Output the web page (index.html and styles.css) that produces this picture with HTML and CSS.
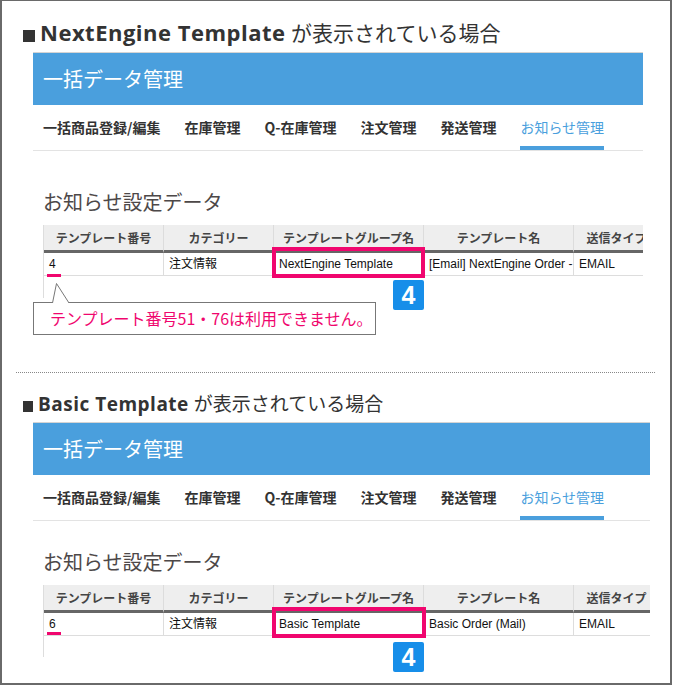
FILE: index.html
```html
<!DOCTYPE html>
<html lang="ja">
<head>
    <meta charset="UTF-8">
    <meta name="viewport" content="width=device-width, initial-scale=1.0">
    <title>お知らせ設定データ</title>
    <link rel="stylesheet" href="styles.css">
</head>
<body>
    <div class="frame">
        <section class="case case-ne">
            <h2 class="case-title"><span class="mark"></span><b>NextEngine Template</b> が表示されている場合</h2>
            <div class="screen">
                <div class="screen-head">一括データ管理</div>
                <nav class="tabs">
                    <span class="tab">一括商品登録/編集</span>
                    <span class="tab">在庫管理</span>
                    <span class="tab">Q-在庫管理</span>
                    <span class="tab">注文管理</span>
                    <span class="tab">発送管理</span>
                    <span class="tab active">お知らせ管理</span>
                </nav>
                <h3 class="data-title">お知らせ設定データ</h3>
                <div class="data">
                    <div class="table-clip">
                        <table class="notice-table">
                            <colgroup>
                                <col class="c-no"><col class="c-cat"><col class="c-group"><col class="c-name"><col class="c-type">
                            </colgroup>
                            <thead>
                                <tr><th>テンプレート番号</th><th>カテゴリー</th><th>テンプレートグループ名</th><th>テンプレート名</th><th>送信タイプ</th></tr>
                            </thead>
                            <tbody>
                                <tr><td>4</td><td>注文情報</td><td>NextEngine Template</td><td>[Email] NextEngine Order -</td><td>EMAIL</td></tr>
                            </tbody>
                        </table>
                    </div>
                    <!-- annotations -->
                    <span class="under"></span>
                    <span class="hilite"></span>
                    <span class="badge">4</span>
                    <div class="callout">テンプレート番号51・76は利用できません。</div>
                    <svg class="callout-tip" width="20" height="22" viewBox="0 0 20 22">
                        <polygon points="1.5,21 5.5,1 18,21" fill="#fff"/>
                        <polyline points="1.5,21 5.5,1.5 18,21" fill="none" stroke="#777" stroke-width="1"/>
                    </svg>
                </div>
            </div>
        </section>

        <hr class="divider">

        <section class="case case-basic">
            <h2 class="case-title"><span class="mark"></span><b>Basic Template</b> が表示されている場合</h2>
            <div class="screen">
                <div class="screen-head">一括データ管理</div>
                <nav class="tabs">
                    <span class="tab">一括商品登録/編集</span>
                    <span class="tab">在庫管理</span>
                    <span class="tab">Q-在庫管理</span>
                    <span class="tab">注文管理</span>
                    <span class="tab">発送管理</span>
                    <span class="tab active">お知らせ管理</span>
                </nav>
                <h3 class="data-title">お知らせ設定データ</h3>
                <div class="data">
                    <div class="table-clip">
                        <table class="notice-table">
                            <colgroup>
                                <col class="c-no"><col class="c-cat"><col class="c-group"><col class="c-name"><col class="c-type">
                            </colgroup>
                            <thead>
                                <tr><th>テンプレート番号</th><th>カテゴリー</th><th>テンプレートグループ名</th><th>テンプレート名</th><th>送信タイプ</th></tr>
                            </thead>
                            <tbody>
                                <tr><td>6</td><td>注文情報</td><td>Basic Template</td><td>Basic Order (Mail)</td><td>EMAIL</td></tr>
                            </tbody>
                        </table>
                    </div>
                    <span class="under"></span>
                    <span class="hilite"></span>
                    <span class="badge">4</span>
                </div>
            </div>
        </section>
    </div>
</body>
</html>
```

FILE: styles.css
```css
body {
    margin: 0;
    background-color: #ffffff;
    color: #333333;
    font-family: "Noto Sans CJK JP", sans-serif;
}

.frame {
    width: 672px;
    height: 685px;
    box-sizing: border-box;
    border: solid #6a6a6a;
    border-width: 1px 2px 2px 2px;
}

/* headings of each case */
.case-title {
    height: 28px;
    margin: 18px 0 5px 21px;
    font-family: "Open Sans", "Noto Sans CJK JP", sans-serif;
    font-size: 21px;
    line-height: 28px;
    font-weight: normal;
    color: #333333;
    white-space: nowrap;
}

.case-title b {
    font-size: 22px;
    line-height: 20px;
    font-weight: 700;
    letter-spacing: 0.5px;
}

.mark {
    display: inline-block;
    width: 12px;
    height: 12px;
    margin-right: 5px;
    background-color: #333333;
    vertical-align: -1px;
}

.case-basic .case-title {
    height: 26px;
    font-size: 19px;
    line-height: 26px;
}

.case-basic .case-title b {
    font-size: 19px;
}

.case-basic .mark {
    width: 10px;
    height: 11px;
    margin-right: 5px;
}

/* screenshot of the admin screen */
.screen {
    margin-left: 31px;
    width: 610px;
    border-top: 1px solid #d4d4d4;
}

.case-basic .screen {
    width: 617px;
}

.screen-head {
    height: 52px;
    line-height: 52px;
    padding-left: 10px;
    background-color: #4a9fdd;
    color: #ffffff;
    font-size: 20px;
}

.tabs {
    display: flex;
    gap: 24px;
    padding-left: 10px;
    border-bottom: 1px solid #e3e3e3;
}

.tab {
    padding: 12px 0 9px;
    border-bottom: 4px solid transparent;
    font-size: 14px;
    line-height: 20px;
    font-weight: bold;
    color: #333333;
    white-space: nowrap;
}

.tab.active {
    color: #4a9fdd;
    border-bottom-color: #4a9fdd;
    font-weight: normal;
}

.data-title {
    margin: 37px 0 9px 10px;
    font-size: 20px;
    line-height: 28px;
    font-weight: normal;
    color: #4d4848;
}

.case-basic .data-title {
    margin-top: 27px;
}

.data {
    position: relative;
    margin-left: 10px;
}

.table-clip {
    width: 600px;
    box-sizing: border-box;
    overflow: hidden;
    padding-bottom: 22px;
    border-left: 1px solid #dddddd;
}

.case-basic .table-clip {
    width: 607px;
    padding-bottom: 21px;
}

.notice-table {
    width: 616px;
    table-layout: fixed;
    border-collapse: separate;
    border-spacing: 0;
}

.c-no { width: 120px; }
.c-cat { width: 110px; }
.c-group { width: 150px; }
.c-name { width: 150px; }
.c-type { width: 86px; }

.notice-table th {
    padding: 0 5px;
    background-color: #eeeeee;
    border-right: 1px solid #dcdcdc;
    border-bottom: 3px solid #666666;
    font-size: 12px;
    line-height: 25px;
    font-weight: bold;
    color: #444444;
    text-align: center;
    white-space: nowrap;
    overflow: hidden;
}

.notice-table td {
    padding: 0 5px;
    border-right: 1px solid #dddddd;
    border-bottom: 1px solid #dddddd;
    font-family: "Liberation Sans", "Noto Sans CJK JP", sans-serif;
    font-size: 12px;
    line-height: 22px;
    color: #111111;
    white-space: nowrap;
    overflow: hidden;
}

/* annotations over the screenshot */
.under {
    position: absolute;
    left: 4px;
    top: 49px;
    width: 14px;
    height: 3px;
    background-color: #f0066e;
}

.case-basic .under {
    top: 47px;
}

.hilite {
    position: absolute;
    left: 229px;
    top: 22px;
    width: 153px;
    height: 31px;
    box-sizing: border-box;
    border: 4px solid #f0066e;
}

.case-basic .hilite {
    width: 154px;
}

.badge {
    position: absolute;
    left: 350px;
    top: 55px;
    width: 31px;
    height: 30px;
    border-radius: 2px;
    background-color: #178ee9;
    color: #ffffff;
    font-family: "Liberation Sans", sans-serif;
    font-size: 25px;
    font-weight: bold;
    line-height: 30px;
    text-align: center;
}

.case-basic .badge {
    top: 57px;
}

.callout {
    position: absolute;
    left: -10px;
    top: 77px;
    width: 343px;
    height: 33px;
    box-sizing: border-box;
    padding-left: 16px;
    border: 1px solid #777777;
    background-color: #ffffff;
    color: #f0066e;
    font-size: 16px;
    line-height: 31px;
    white-space: nowrap;
}

.callout-tip {
    position: absolute;
    left: 8px;
    top: 57px;
}

.divider {
    height: 0;
    margin: 74px 15px 0 14px;
    border: 0;
    border-top: 1px dotted #888888;
}
```
